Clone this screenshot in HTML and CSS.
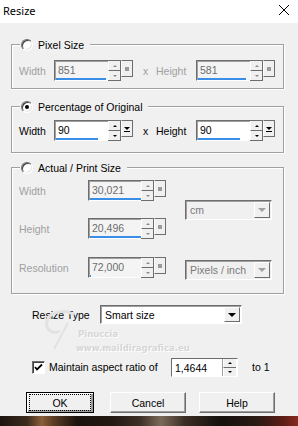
FILE: index.html
```html
<!DOCTYPE html>
<html lang="en">
<head>
    <meta charset="UTF-8">
    <title>Resize</title>
    <link rel="stylesheet" href="styles.css">
</head>
<body>
    <div class="dialog">
        <div class="titlebar">
            <span class="title">Resize</span>
            <svg class="close" width="12" height="12" viewBox="0 0 12 12">
                <path d="M1 1 L11 11 M11 1 L1 11" stroke="#000" stroke-width="1" fill="none"/>
            </svg>
        </div>

        <!-- Pixel size -->
        <div class="group g-pixel">
            <div class="legend"><span class="radio"></span>Pixel Size</div>
            <div class="row dim">
                <span class="lbl">Width</span>
                <div class="spin off">
                    <div class="field"><span class="val">851</span><i class="bar" style="width:50px"></i></div>
                    <div class="updown"><b class="up"></b><b class="down"></b></div>
                    <div class="drop"><span class="sq"></span></div>
                </div>
                <span class="times">x</span>
                <span class="lbl2">Height</span>
                <div class="spin off">
                    <div class="field"><span class="val">581</span><i class="bar" style="width:48px"></i></div>
                    <div class="updown"><b class="up"></b><b class="down"></b></div>
                    <div class="drop"><span class="sq"></span></div>
                </div>
            </div>
        </div>

        <!-- Percentage -->
        <div class="group g-percent">
            <div class="legend"><span class="radio checked"></span>Percentage of Original</div>
            <div class="row">
                <span class="lbl">Width</span>
                <div class="spin">
                    <div class="field"><span class="val">90</span><i class="bar" style="width:42px"></i></div>
                    <div class="updown"><b class="up"></b><b class="down"></b></div>
                    <div class="drop"><span class="dd"></span></div>
                </div>
                <span class="times">x</span>
                <span class="lbl2">Height</span>
                <div class="spin">
                    <div class="field"><span class="val">90</span><i class="bar" style="width:42px"></i></div>
                    <div class="updown"><b class="up"></b><b class="down"></b></div>
                    <div class="drop"><span class="dd"></span></div>
                </div>
            </div>
        </div>

        <!-- Actual / print size -->
        <div class="group g-print">
            <div class="legend"><span class="radio"></span>Actual / Print Size</div>
            <div class="cols dim">
                <div class="left">
                    <div class="prow">
                        <span class="plbl">Width</span>
                        <div class="spin off pspin">
                            <div class="field"><span class="val">30,021</span><i class="bar" style="width:51px"></i></div>
                            <div class="updown"><b class="up"></b><b class="down"></b></div>
                            <div class="drop"><span class="sq"></span></div>
                        </div>
                    </div>
                    <div class="prow">
                        <span class="plbl">Height</span>
                        <div class="spin off pspin">
                            <div class="field"><span class="val">20,496</span><i class="bar" style="width:51px"></i></div>
                            <div class="updown"><b class="up"></b><b class="down"></b></div>
                            <div class="drop"><span class="sq"></span></div>
                        </div>
                    </div>
                    <div class="prow">
                        <span class="plbl">Resolution</span>
                        <div class="spin off pspin">
                            <div class="field"><span class="val">72,000</span><i class="bar" style="width:1px"></i></div>
                            <div class="updown"><b class="up"></b><b class="down"></b></div>
                            <div class="drop"><span class="sq"></span></div>
                        </div>
                    </div>
                </div>
                <div class="right">
                    <div class="select off unit">
                        <span class="sel-text">cm</span>
                        <span class="sel-btn"><i></i></span>
                    </div>
                    <div class="select off res">
                        <span class="sel-text">Pixels / inch</span>
                        <span class="sel-btn"><i></i></span>
                    </div>
                </div>
            </div>
        </div>

        <div class="type-row">
            <span class="type-lbl">Resize Type</span>
            <div class="select type">
                <span class="sel-text">Smart size</span>
                <span class="sel-btn"><i></i></span>
            </div>
        </div>

        <div class="check-row">
            <span class="check">
                <svg width="9" height="9" viewBox="0 0 9 9"><path d="M1 4 L3 6.5 L8 1.5" stroke="#000" stroke-width="1.8" fill="none"/></svg>
            </span>
            <span class="check-lbl">Maintain aspect ratio of</span>
            <div class="ratio">
                <span class="val">1,4644</span>
                <div class="updown"><b class="up"></b><b class="down"></b></div>
            </div>
            <span class="to">to 1</span>
        </div>

        <div class="buttons">
            <button class="btn ok"><span>OK</span></button>
            <button class="btn cancel">Cancel</button>
            <button class="btn help">Help</button>
        </div>

        <div class="strip"></div>

        <div class="watermark">
            <svg class="wm-logo" width="34" height="42" viewBox="0 0 34 42">
                <path d="M30 6 C22 0 6 2 3 12 C1 20 8 26 16 22" stroke="#e2e2e2" stroke-width="3" fill="none"/>
                <path d="M24 14 L10 40" stroke="#e2e2e2" stroke-width="2" fill="none"/>
            </svg>
            <span class="wm-name">Pinuccia</span>
            <span class="wm-url">www.maildiragrafica.eu</span>
        </div>
    </div>
</body>
</html>
```

FILE: styles.css
```css
body {
    margin: 0;
    background: #f0f0f0;
    font-family: "Liberation Sans", Arial, sans-serif;
    font-size: 10.5px;
    color: #000;
}
.dialog {
    position: relative;
    width: 298px;
    height: 426px;
    overflow: hidden;
    background: #f0f0f0;
}
.titlebar {
    height: 23px;
    background: #fff;
    display: flex;
    align-items: center;
    justify-content: space-between;
}
.title {
    font-family: "Noto Sans", sans-serif;
    font-size: 11px;
    padding-left: 3px;
    margin-top: -3px;
}
.close {
    margin-right: 8px;
    margin-top: -3px;
}

/* group boxes */
.group {
    position: relative;
    width: 271px;
    margin-left: 11px;
    border: 1px solid #a0a0a0;
    box-shadow: inset 1px 1px 0 #fff, 1px 1px 0 #fff;
}
.g-pixel { margin-top: 21px; padding: 15px 0 7px; }
.g-percent { margin-top: 17px; padding: 13px 0 11px; }
.g-print { margin-top: 14px; padding: 12px 0 13px; }
.legend {
    position: absolute;
    top: -8px;
    left: 8px;
    height: 15px;
    display: flex;
    align-items: center;
    gap: 5px;
    padding: 0 6px 0 1px;
    background: #f0f0f0;
}
.radio {
    position: relative;
    width: 12px;
    height: 12px;
    box-sizing: border-box;
    border-radius: 50%;
    border: 1px solid;
    border-color: #6d6d6d #fff #fff #6d6d6d;
    background: #fff;
    box-shadow: inset 1px 1px 0 #404040, inset -1px -1px 0 #e3e3e3;
}
.radio.checked::after {
    content: "";
    position: absolute;
    left: 3px;
    top: 3px;
    width: 4px;
    height: 4px;
    border-radius: 50%;
    background: #000;
}

.row {
    display: flex;
    align-items: center;
    height: 21px;
    padding-left: 7px;
}
.dim { color: #a0a0a0; }
.lbl { width: 35px; }
.times { width: 23px; box-sizing: border-box; padding-left: 10px; }
.lbl2 { width: 40px; }

/* spin fields */
.spin {
    display: flex;
    align-items: flex-start;
    width: 79px;
    height: 21px;
}
.field {
    position: relative;
    flex: 1;
    height: 21px;
    box-sizing: border-box;
    border-top: 1px solid #6d6d6d;
    border-left: 1px solid #6d6d6d;
    border-bottom: 1px solid #fff;
    box-shadow: inset 1px 1px 0 #a0a0a0;
    background: #fff;
}
.off .field { background: #f4f4f4; }
.val {
    display: block;
    padding: 2px 0 0 3px;
    line-height: 14px;
    color: #000;
}
.off .val { color: #6d6d6d; }
.bar {
    position: absolute;
    left: 1px;
    bottom: 0;
    height: 2px;
    background: #3a8ee6;
}
.updown {
    width: 13px;
    height: 21px;
    box-sizing: border-box;
    display: flex;
    flex-direction: column;
    border-top: 1px solid #6d6d6d;
    border-right: 1px solid #6d6d6d;
    border-bottom: 1px solid #6d6d6d;
    background: #f0f0f0;
}
.updown b {
    flex: 1;
    display: flex;
    align-items: center;
    justify-content: center;
    border-left: 1px solid #fff;
}
.updown .down { border-top: 1px solid #6d6d6d; }
.updown .up::after, .updown .down::after {
    content: "";
    border-left: 2px solid transparent;
    border-right: 2px solid transparent;
}
.updown .up::after { border-bottom: 2px solid #000; }
.updown .down::after { border-top: 2px solid #000; }
.off .updown .up::after { border-bottom-color: #8a8a8a; }
.off .updown .down::after { border-top-color: #8a8a8a; }
.drop {
    width: 12px;
    height: 17px;
    box-sizing: border-box;
    border: 1px solid #6d6d6d;
    border-left: 1px solid #fff;
    background: #f0f0f0;
    display: flex;
    align-items: center;
    justify-content: center;
}
.sq {
    width: 4px;
    height: 4px;
    background: #9a9a9a;
}
.dd {
    position: relative;
    width: 0;
    height: 0;
    border-left: 3px solid transparent;
    border-right: 3px solid transparent;
    border-top: 3px solid #000;
}
.dd::after {
    content: "";
    position: absolute;
    left: -3px;
    top: 1px;
    width: 6px;
    height: 1px;
    background: #000;
}

/* print size */
.cols { display: flex; }
.left {
    display: flex;
    flex-direction: column;
    gap: 17px;
    padding-left: 7px;
}
.prow {
    display: flex;
    align-items: center;
    height: 21px;
}
.prow + .prow + .prow { margin-top: 1px; }
.plbl { width: 69px; }
.pspin { width: 78px; }
.right {
    display: flex;
    flex-direction: column;
    margin-left: 19px;
    padding-top: 20px;
}
.res { margin-top: 40px; }

/* selects */
.select {
    display: flex;
    width: 87px;
    height: 20px;
    box-sizing: border-box;
    border: 1px solid;
    border-color: #6d6d6d #fff #fff #6d6d6d;
    box-shadow: inset 1px 1px 0 #a0a0a0;
    background: #fff;
}
.select.off { background: #f0f0f0; }
.sel-text {
    flex: 1;
    padding: 3px 0 0 4px;
    color: #000;
}
.select.off .sel-text { color: #7a7a7a; }
.sel-btn {
    width: 16px;
    margin: 1px;
    box-sizing: border-box;
    border: 1px solid;
    border-color: #fff #6d6d6d #6d6d6d #fff;
    background: #f0f0f0;
    display: flex;
    align-items: center;
    justify-content: center;
}
.sel-btn i {
    border-left: 4px solid transparent;
    border-right: 4px solid transparent;
    border-top: 4px solid #000;
}
.select.off .sel-btn i { border-top-color: #a0a0a0; }

.type-row {
    display: flex;
    align-items: center;
    margin-top: 11px;
    padding-left: 32px;
}
.type-lbl { width: 68px; }
.select.type { width: 142px; height: 19px; }

.check-row {
    display: flex;
    align-items: center;
    margin-top: 34px;
    padding-left: 32px;
    height: 18px;
}
.check {
    width: 13px;
    height: 13px;
    box-sizing: border-box;
    border: 1px solid;
    border-color: #6d6d6d #fff #fff #6d6d6d;
    box-shadow: inset 1px 1px 0 #404040;
    background: #fff;
    display: flex;
    align-items: center;
    justify-content: center;
}
.check-lbl { margin-left: 4px; width: 122px; }
.ratio {
    display: flex;
    width: 67px;
    height: 19px;
    box-sizing: border-box;
    border: 1px solid;
    border-color: #6d6d6d #fff #fff #6d6d6d;
    background: #fff;
}
.ratio .val { flex: 1; padding-top: 2px; }
.ratio .updown {
    height: 17px;
    border: none;
    background: #f0f0f0;
    box-shadow: -1px 0 0 #a0a0a0;
    margin-right: 1px;
}
.to { margin-left: 14px; }

/* buttons */
.buttons {
    display: flex;
    margin-top: 16px;
    padding-left: 26px;
}
.btn {
    height: 21px;
    box-sizing: border-box;
    padding: 0;
    border: 1px solid;
    border-color: #fff #6d6d6d #6d6d6d #fff;
    box-shadow: inset -1px -1px 0 #a0a0a0;
    background: #f0f0f0;
    font-family: "Liberation Sans", Arial, sans-serif;
    font-size: 10.5px;
    color: #000;
}
.ok {
    width: 68px;
    border-color: #000;
    box-shadow: inset 1px 1px 0 #fff, inset -2px -2px 0 #a0a0a0;
}
.ok span {
    display: flex;
    align-items: center;
    justify-content: center;
    height: 15px;
    margin: 0 2px;
    border: 1px dotted #000;
}
.cancel { width: 76px; margin-left: 16px; }
.help { width: 76px; margin-left: 13px; }

.strip {
    margin-top: 3px;
    height: 11px;
    background: linear-gradient(90deg, #1c1410 0%, #3a2a1c 9%, #8b5e3a 14%, #5a3c24 18%, #1a120c 26%, #241a14 38%, #3d3026 47%, #7a6a5a 54%, #3a2e24 62%, #14100c 74%, #2a1a14 86%, #5a1e16 95%, #8a2a20 100%);
}

/* watermark over the lower part */
.watermark {
    position: absolute;
    left: 44px;
    top: 309px;
    width: 160px;
    height: 46px;
    pointer-events: none;
}
.wm-logo {
    position: absolute;
    left: 0;
    top: 0;
}
.wm-name, .wm-url {
    position: absolute;
    font-family: "DejaVu Sans", sans-serif;
    font-weight: bold;
    font-size: 8.5px;
    color: #d6d6d6;
    text-shadow: 1px 1px 0 #fff;
}
.wm-name { left: 34px; top: 20px; }
.wm-url { left: 32px; top: 34px; }
```
